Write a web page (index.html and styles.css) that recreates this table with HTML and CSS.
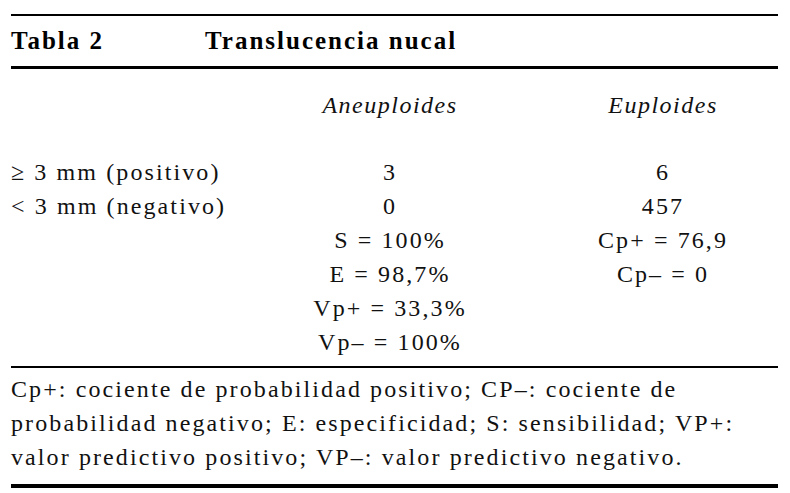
FILE: index.html
```html
<!DOCTYPE html>
<html lang="es">
<head>
<meta charset="utf-8">
<title>Tabla 2</title>
<link rel="stylesheet" href="styles.css">
</head>
<body>
<div class="table">
  <div class="caption">
    <span class="label">Tabla 2</span>
    <span class="title">Translucencia nucal</span>
  </div>
  <div class="grid">
    <div class="c1 head"></div>
    <div class="c2 head">Aneuploides</div>
    <div class="c3 head">Euploides</div>

    <div class="c1">≥ 3 mm (positivo)</div>
    <div class="c2">3</div>
    <div class="c3">6</div>

    <div class="c1">&lt; 3 mm (negativo)</div>
    <div class="c2">0</div>
    <div class="c3">457</div>

    <div class="c1"></div>
    <div class="c2">S = 100%</div>
    <div class="c3">Cp+ = 76,9</div>

    <div class="c1"></div>
    <div class="c2">E = 98,7%</div>
    <div class="c3">Cp– = 0</div>

    <div class="c1"></div>
    <div class="c2">Vp+ = 33,3%</div>
    <div class="c3"></div>

    <div class="c1"></div>
    <div class="c2">Vp– = 100%</div>
    <div class="c3"></div>
  </div>
  <p class="note">Cp+: cociente de probabilidad positivo; CP–: cociente de<br>probabilidad negativo; E: especificidad; S: sensibilidad; VP+:<br>valor predictivo positivo; VP–: valor predictivo negativo.</p>
</div>
</body>
</html>
```
FILE: styles.css
```css
html, body {
  margin: 0;
  padding: 0;
  background: #fff;
}
body {
  font-family: "Liberation Serif", "DejaVu Serif", serif;
  color: #111;
  font-size: 24px;
  letter-spacing: 2.1px;
}
.table {
  width: 767px;
  margin-left: 11px;
  padding-top: 14px;
}
.caption {
  border-top: 2px solid #000;
  border-bottom: 3px solid #000;
  height: 50px;
  display: flex;
  align-items: center;
  font-weight: bold;
  font-size: 25px;
  letter-spacing: 2px;
  color: #000;
}
.caption .label {
  width: 194px;
}
.grid {
  display: grid;
  grid-template-columns: 250px 258px 1fr;
  grid-template-rows: 86px;
  grid-auto-rows: 34px;
  line-height: 34px;
  padding-bottom: 7px;
  border-bottom: 2px solid #000;
  white-space: nowrap;
}
.grid .head {
  font-style: italic;
  letter-spacing: 1.5px;
  padding-top: 19px;
}
.c2 { text-align: center; }
.c3 { text-align: center; padding-left: 29px; }
.note {
  margin: 0;
  padding: 4px 0 10px;
  line-height: 34px;
  white-space: nowrap;
  border-bottom: 4px solid #000;
}
```
